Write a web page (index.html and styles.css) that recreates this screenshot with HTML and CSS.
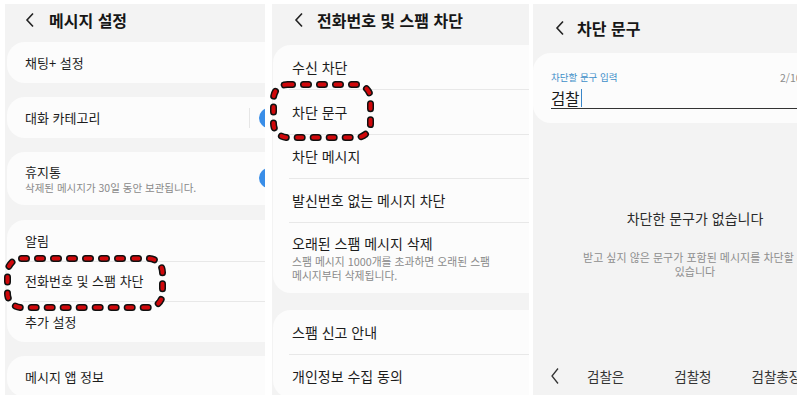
FILE: index.html
```html
<!DOCTYPE html>
<html lang="ko">
<head>
<meta charset="utf-8">
<link rel="stylesheet" href="styles.css">
</head>
<body>
<div class="stage">
  <section class="panel p1">
    <header class="head">
      <svg class="chev" width="10" height="16" viewBox="0 0 10 16"><path d="M8 1.5 L2 8 L8 14.5" fill="none" stroke="#222" stroke-width="1.6"/></svg>
      <h1 class="title">메시지 설정</h1>
    </header>
    <div class="card c1">
      <div class="row"><span class="txt">채팅+ 설정</span></div>
    </div>
    <div class="card c2">
      <div class="row"><span class="txt grow">대화 카테고리</span><span class="vdiv"></span><span class="toggle"></span></div>
    </div>
    <div class="card c3">
      <div class="row tall"><div class="grow"><div class="txt">휴지통</div><div class="sub">삭제된 메시지가 30일 동안 보관됩니다.</div></div><span class="toggle"></span></div>
    </div>
    <div class="card c4">
      <div class="row"><span class="txt">알림</span></div>
      <div class="row div"><span class="txt">전화번호 및 스팸 차단</span></div>
      <div class="row div"><span class="txt">추가 설정</span></div>
    </div>
    <div class="card c5">
      <div class="row"><span class="txt">메시지 앱 정보</span></div>
    </div>
  </section>

  <section class="panel p2">
    <header class="head">
      <svg class="chev" width="10" height="16" viewBox="0 0 10 16"><path d="M8 1.5 L2 8 L8 14.5" fill="none" stroke="#222" stroke-width="1.6"/></svg>
      <h1 class="title">전화번호 및 스팸 차단</h1>
    </header>
    <div class="card d1">
      <div class="row r44"><span class="txt">수신 차단</span></div>
      <div class="row r45 div"><span class="txt">차단 문구</span></div>
      <div class="row r44 div"><span class="txt">차단 메시지</span></div>
      <div class="row r44 div"><span class="txt">발신번호 없는 메시지 차단</span></div>
      <div class="row multi div"><div><div class="txt">오래된 스팸 메시지 삭제</div><div class="sub two">스팸 메시지 1000개를 초과하면 오래된 스팸<br>메시지부터 삭제됩니다.</div></div></div>
    </div>
    <div class="card d2">
      <div class="row r44"><span class="txt">스팸 신고 안내</span></div>
      <div class="row r44 div"><span class="txt">개인정보 수집 동의</span></div>
    </div>
  </section>

  <section class="panel p3">
    <header class="head h3">
      <svg class="chev" width="10" height="16" viewBox="0 0 10 16"><path d="M8 1.5 L2 8 L8 14.5" fill="none" stroke="#222" stroke-width="1.6"/></svg>
      <h1 class="title">차단 문구</h1>
    </header>
    <div class="card inputcard">
      <div class="labelrow"><span class="label">차단할 문구 입력</span><span class="count">2/100</span></div>
      <div class="field"><span class="value">검찰</span><span class="caret"></span></div>
    </div>
    <div class="empty">
      <div class="etitle">차단한 문구가 없습니다</div>
      <div class="esub">받고 싶지 않은 문구가 포함된 메시지를 차단할 수<br>있습니다</div>
    </div>
    <div class="suggest">
      <svg class="schev" width="10" height="18" viewBox="0 0 10 18"><path d="M8 1.5 L2 9 L8 16.5" fill="none" stroke="#333" stroke-width="1.3"/></svg>
      <span class="sw">검찰은</span>
      <span class="sw">검찰청</span>
      <span class="sw">검찰총장</span>
    </div>
  </section>

  <svg class="mark m1" width="162" height="56" viewBox="0 0 162 56">
    <rect x="3.5" y="3.5" width="155" height="49" rx="14" fill="none" stroke="#111" stroke-width="7" stroke-dasharray="5 11" stroke-linecap="round"/>
    <rect x="3.5" y="3.5" width="155" height="49" rx="14" fill="none" stroke="#d0080b" stroke-width="4" stroke-dasharray="5 11" stroke-linecap="round"/>
  </svg>
  <svg class="mark m2" width="104" height="60" viewBox="0 0 104 60">
    <rect x="3.5" y="3.5" width="97" height="53" rx="14" fill="none" stroke="#111" stroke-width="7" stroke-dasharray="5 11" stroke-linecap="round"/>
    <rect x="3.5" y="3.5" width="97" height="53" rx="14" fill="none" stroke="#d0080b" stroke-width="4" stroke-dasharray="5 11" stroke-linecap="round"/>
  </svg>
</div>
</body>
</html>
```

FILE: styles.css
```css
* { box-sizing: border-box; margin: 0; padding: 0; }
html, body { background: #ffffff; }
body {
  width: 800px;
  height: 400px;
  overflow: hidden;
  font-family: "Noto Sans CJK KR", "Noto Sans", sans-serif;
  color: #1c1c1c;
}
.stage {
  position: relative;
  display: flex;
  padding: 4px 0 0 5px;
  height: 400px;
}
.panel {
  background: #f3f3f3;
  height: 391px;
  overflow: hidden;
  display: flex;
  flex-direction: column;
  flex: none;
}
.p1 { width: 260px; }
.p2 { width: 257px; margin-left: 7px; }
.p3 { width: 264px; margin-left: 4px; }

.head {
  height: 32px;
  display: flex;
  align-items: center;
  flex: none;
}
.p1 .head { padding-left: 20px; }
.p2 .head, .p3 .head { padding-left: 22px; }
.chev { flex: none; }
.title {
  font-size: 16px;
  font-weight: 700;
  color: #161616;
  line-height: 20px;
}
.p1 .title { margin-left: 14px; }
.p2 .title { margin-left: 13px; }
.p3 .title { margin-left: 12px; }
.head.h3 { height: 48px; }

.card {
  background: #fcfcfc;
  border-radius: 18px;
  flex: none;
  width: 300px;
  margin-left: 2px;
}
.row {
  display: flex;
  align-items: center;
  height: 41px;
  padding-left: 18px;
  position: relative;
}
.row.div::before {
  content: "";
  position: absolute;
  left: 16px;
  right: 0;
  top: 0;
  height: 1px;
  background: #e8e8e8;
}
.txt {
  font-size: 13px;
  line-height: 18px;
  color: #1c1c1c;
  white-space: nowrap;
}
.p2 .txt { font-size: 14px; }
.grow { flex: 1; }
.sub {
  font-size: 10.5px;
  line-height: 14px;
  color: #8a8a8a;
  white-space: nowrap;
}
.vdiv {
  width: 1px;
  height: 20px;
  background: #e6e6e6;
  margin-right: 9px;
}
.toggle {
  width: 40px;
  height: 20px;
  border-radius: 10px;
  background: #3a8ee8;
  margin-right: 8px;
}

.c1 { margin-top: 6px; }
.c2 { margin-top: 14px; }
.c3 { margin-top: 14px; }
.c3 .row.tall { height: 53px; align-items: flex-start; padding-top: 11px; }
.c3 .toggle { margin-top: 5px; margin-left: 10px; }
.c4 { margin-top: 15px; }
.c4 .row:nth-child(2) { height: 40px; }
.c5 { margin-top: 14px; }

.d1 { margin-top: 9px; }
.p2 .card { margin-left: 1px; }
.p2 .row { padding-left: 19px; }
.row.r44 { height: 44px; }
.row.r45 { height: 45px; }
.row.multi { height: 71px; align-items: flex-start; padding-top: 12px; }
.sub.two { font-size: 10.8px; margin-top: 2px; line-height: 14px; }
.d2 { margin-top: 17px; }

.p3 .card.inputcard {
  margin-left: 0;
  margin-top: 1px;
  padding: 18px 0 14px 18px;
  width: 300px;
}
.labelrow {
  display: flex;
  height: 12px;
  align-items: center;
}
.label {
  font-size: 9.5px;
  color: #3f8fc9;
  line-height: 12px;
  width: 229px;
  flex: none;
}
.count {
  font-size: 10.5px;
  color: #8c8c8c;
  flex: none;
}
.field {
  margin-top: 4px;
  height: 22px;
  border-bottom: 1.5px solid #333;
  display: flex;
  align-items: center;
}
.value {
  font-size: 15.5px;
  line-height: 20px;
  color: #1a1a1a;
}
.caret {
  width: 1.5px;
  height: 18px;
  background: #3a86c8;
  margin-left: 1px;
}

.empty {
  width: 324px;
  text-align: center;
  margin-top: 85px;
  flex: none;
}
.etitle {
  font-size: 14px;
  line-height: 20px;
  color: #2a2a2a;
}
.esub {
  margin-top: 22px;
  font-size: 11px;
  line-height: 14px;
  color: #8e8e8e;
  white-space: nowrap;
}
.suggest {
  margin-top: auto;
  height: 36px;
  display: flex;
  align-items: center;
  padding-left: 17px;
  padding-bottom: 2px;
  flex: none;
  white-space: nowrap;
}
.schev { flex: none; }
.sw {
  font-size: 13.5px;
  color: #333;
  flex: none;
}
.sw:nth-child(2) { margin-left: 27px; }
.sw:nth-child(3) { margin-left: 50px; }
.sw:nth-child(4) { margin-left: 40px; }

.mark { position: absolute; }
.m1 { left: 4px; top: 255px; }
.m2 { left: 270px; top: 81px; }
```
